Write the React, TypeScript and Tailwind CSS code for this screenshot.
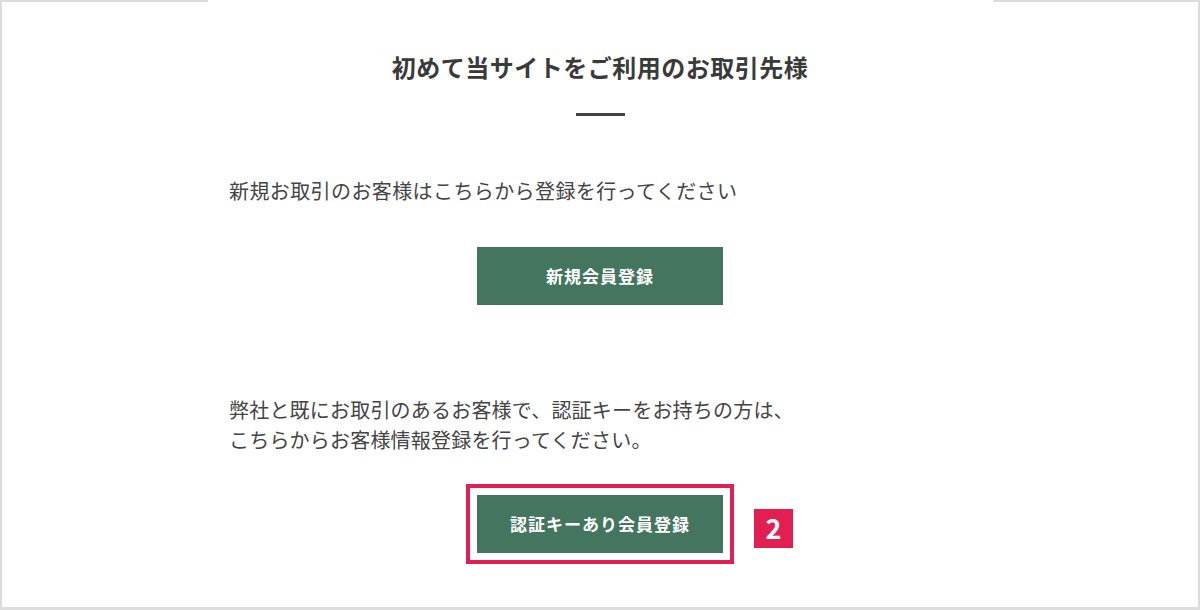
import React from "react";

// 登録案内パネル
const jp = "font-['Noto_Sans_CJK_JP','Noto_Sans',sans-serif]";

const GreenButton = ({ label }: { label: string }) => (
  <button className="w-[246px] h-[58px] bg-[#44755f] text-white text-[17px] font-bold tracking-[1px] flex items-center justify-center">
    {label}
  </button>
);

export default function App() {
  return (
    <div className={`w-[1200px] h-[610px] bg-white flex flex-col ${jp}`}>
      {/* 上の枠線 (中央部分は切れている) */}
      <div className="flex h-[2px] shrink-0">
        <div className="w-[208px] bg-[#dcdcdc]" />
        <div className="flex-1" />
        <div className="w-[207px] bg-[#dcdcdc]" />
      </div>

      <div className="flex-1 border-l-2 border-r-2 border-b-[3px] border-[#dcdcdc]">
        <div className="ml-[227px] w-[742px] flex flex-col items-center">
          <h2 className="mt-[47px] h-[36px] leading-[36px] text-[24px] font-bold tracking-[0.5px] text-[#3a3a3a]">
            初めて当サイトをご利用のお取引先様
          </h2>
          <div className="mt-[28px] w-[49px] h-[3px] bg-[#444]" />

          <p className="mt-[60px] self-stretch text-[20px] leading-[30px] tracking-[0.4px] text-[#444]">
            新規お取引のお客様はこちらから登録を行ってください
          </p>
          <div className="mt-[41px]">
            <GreenButton label="新規会員登録" />
          </div>

          <p className="mt-[90px] self-stretch text-[20px] leading-[30px] tracking-[0.2px] text-[#444]">
            弊社と既にお取引のあるお客様で、認証キーをお持ちの方は、
            <br />
            こちらからお客様情報登録を行ってください。
          </p>

          <div className="mt-[29px] relative border-4 border-[#e31f52] p-[7px]">
            <GreenButton label="認証キーあり会員登録" />
            <span className="absolute left-[calc(100%+24px)] top-[21px] w-[39px] h-[39px] bg-[#e31f52] text-white text-[27px] font-bold flex items-center justify-center">
              2
            </span>
          </div>
        </div>
      </div>
    </div>
  );
}
